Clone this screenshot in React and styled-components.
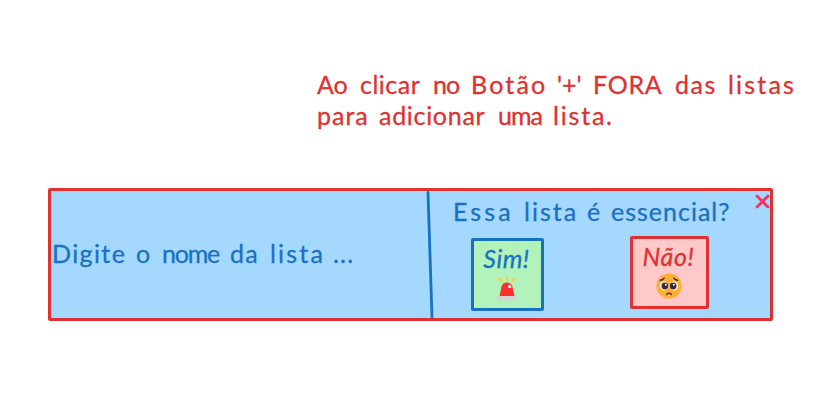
import React from "react";
import styled, { createGlobalStyle } from "styled-components";

const GlobalStyle = createGlobalStyle`
  * { box-sizing: border-box; }
  body { margin: 0; background: #fff; }
`;

const Page = styled.main`
  width: 839px;
  height: 404px;
  padding: 69px 0 0 48px;
  overflow: hidden;
  background: #fff;
  font-family: Lato, "Open Sans", sans-serif;
  font-size: 25px;
  line-height: 31px;
  -webkit-text-stroke: 0.3px currentColor;
`;

const Note = styled.header`
  margin-left: 269px;
  height: 119px;
  color: #e03131;
`;

const Line = styled.p`
  display: flex;
  margin: 0;
  white-space: pre;
`;

const Word = styled.span`
  flex: none;
  width: ${(p) => p.$width}px;
  letter-spacing: ${(p) => p.$letter}px;
`;

const Panel = styled.section`
  display: flex;
  width: 725px;
  height: 133px;
  border: 3px solid #e03131;
  border-radius: 2px;
  background: #a5d8ff;
  color: #1971c2;
`;

const NameField = styled.div`
  width: 375px;
  padding: 47px 0 0 1px;
`;

const Divider = styled.svg`
  flex: none;
  width: 10px;
  height: 127px;
`;

const Question = styled.div`
  width: 315px;
  padding: 5px 0 0 17px;
`;

const Options = styled.div`
  display: flex;
  align-items: flex-start;
  gap: 86px;
  padding: 9px 0 0 19px;
`;

const Option = styled.button`
  display: flex;
  flex-direction: column;
  align-items: center;
  width: ${(p) => p.$width}px;
  height: 73px;
  margin: ${(p) => p.$margin};
  padding: 2px 2px 0 0;
  border: 3px solid ${(p) => p.$color};
  border-radius: 2px;
  background: ${(p) => p.$fill};
  color: ${(p) => p.$color};
  font: italic 25px/31px Lato, sans-serif;
  letter-spacing: ${(p) => p.$letter}px;
  svg { flex: none; }
`;

const Close = styled.button`
  width: 15px;
  height: 15px;
  margin: 3px 0 0 4px;
  padding: 0;
  border: 0;
  background: none;
  svg { display: block; }
`;

const Siren = () => (
  <svg width="24" height="28" viewBox="0 0 24 28">
    <path d="M12 2.8v3.6M4 4.4l3 3.2M20 4.4l-3 3.2" stroke="#ffd02e" strokeWidth="1.8" strokeLinecap="round" />
    <path d="M4.3 23 6.6 12.6q1-4 5.4-4t5.4 4L19.7 23Z" fill="#fa302d" />
    <circle cx="14.7" cy="12.5" r="1.8" fill="#ffe3e3" />
    <rect x="2" y="22" width="20" height="4.6" rx="1.5" fill="#d3d3d3" />
  </svg>
);

const PleadingFace = () => (
  <svg width="26" height="28" viewBox="0 0 26 28">
    <circle cx="13" cy="14" r="12.6" fill="#fcaf32" />
    <g fill="#fff">
      <circle cx="8.2" cy="14" r="4.4" />
      <circle cx="17.8" cy="14" r="4.4" />
    </g>
    <g fill="#402a32">
      <circle cx="8.9" cy="14" r="3.4" />
      <circle cx="17.1" cy="14" r="3.4" />
    </g>
    <g fill="#fff">
      <circle cx="9.8" cy="12.7" r="1" />
      <circle cx="17.8" cy="12.7" r="1" />
    </g>
    <path d="M4.3 8.3q2.7-.3 3.8-2.2M21.7 8.3q-2.7-.3-3.8-2.2M10.7 22.4q2.3-2.5 4.6 0" fill="none" stroke="#402a32" strokeWidth="1.4" strokeLinecap="round" />
  </svg>
);

/* Each word: text, advance to the next word, letter spacing. */
const noteFirst = [
  ["Ao ", 43, 0], ["clicar ", 73, 0.5], ["no ", 38, -1], ["Botão ", 86, 2.2],
  ["'+' ", 36, 0], ["FORA ", 82, 0.7], ["das ", 53, 1.5], ["listas", 70, 2.2],
];
const noteSecond = [["para ", 62, 1], ["adicionar ", 119, 0.7], ["uma ", 55, -1], ["lista.", 62, 1.8]];
const placeholder = [
  ["Digite ", 84, 1.4], ["o ", 26, 0], ["nome ", 68, -1.2], ["da ", 40, 1.3], ["lista ", 63, 2.2], ["...", 24, 1.2],
];
const question = [["Essa ", 71, 3.1], ["lista ", 63, 2], ["é ", 24, 0], ["essencial?", 122, 1]];

const WordLine = ({ words }) => (
  <Line>
    {words.map(([text, width, letter]) => (
      <Word key={text} $width={width} $letter={letter}>{text}</Word>
    ))}
  </Line>
);

export default function App() {
  return (
    <Page>
      <GlobalStyle />
      <Note>
        <WordLine words={noteFirst} />
        <WordLine words={noteSecond} />
      </Note>
      <Panel>
        <NameField>
          <WordLine words={placeholder} />
        </NameField>
        <Divider viewBox="0 0 10 127">
          <path d="M2 1.5 6 126.5" stroke="#1971c2" strokeWidth="2.8" strokeLinecap="round" />
        </Divider>
        <Question>
          <WordLine words={question} />
          <Options>
            <Option $width={73} $margin="2px 0 0 -1px" $color="#1971c2" $fill="#b2f2bb" $letter={0.5}>
              Sim!
              <Siren />
            </Option>
            <Option $width={79} $margin="0" $color="#e03131" $fill="#ffc9c9" $letter={0.7}>
              Não!
              <PleadingFace />
            </Option>
          </Options>
        </Question>
        <Close aria-label="Fechar">
          <svg width="15" height="15" viewBox="0 0 15 15">
            <path d="m2 2 11 11M13 2 2 13" stroke="#f92f60" strokeWidth="2.8" strokeLinecap="round" />
          </svg>
        </Close>
      </Panel>
    </Page>
  );
}
